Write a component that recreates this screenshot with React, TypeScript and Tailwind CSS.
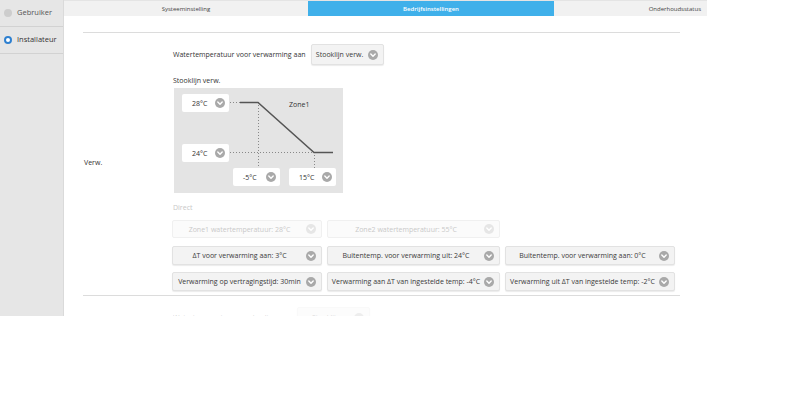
import React from "react";

function Chev({ light = false }: { light?: boolean }) {
  return (
    <svg width="10" height="10" viewBox="0 0 10 10" className="shrink-0">
      <circle cx="5" cy="5" r="5" fill={light ? "#e6e6e6" : "#a9a9a9"} />
      <path d="M2.8 4 L5 6.2 L7.2 4" stroke="#fff" strokeWidth="1.4" fill="none" strokeLinecap="round" strokeLinejoin="round" />
    </svg>
  );
}

function Sel({ label, w, disabled = false }: { label: string; w: string; disabled?: boolean }) {
  return (
    <div
      className={`${w} h-full flex items-center rounded-[2px] border pr-[5px] ${
        disabled
          ? "bg-[#fbfbfb] border-[#f0f0f0] text-[#c9c9c9]"
          : "bg-[#f3f3f3] border-[#e2e2e2] text-[#3a3a3a] shadow-[0_1px_1px_rgba(0,0,0,0.08)]"
      }`}
    >
      <span className="flex-1 text-center whitespace-nowrap">{label}</span>
      <Chev light={disabled} />
    </div>
  );
}

function ChartSel({ label, cls }: { label: string; cls: string }) {
  return (
    <div className={`absolute ${cls} w-[47px] h-[18px] bg-white rounded-[2px] flex items-center pl-[10px] pr-[4px] text-[#333]`}>
      <span className="flex-1">{label}</span>
      <Chev />
    </div>
  );
}

export default function App() {
  return (
    <div className="w-[800px] h-[406px] bg-white" style={{ fontFamily: '"Open Sans", sans-serif' }}>
      <div className="h-[316px] flex overflow-hidden text-[7px] leading-none">
        <div className="w-[64px] bg-[#e6e6e6] border-r border-[#dadada] shrink-0 text-[7.5px]">
          <div className="h-[27px] flex items-center gap-[5px] pl-[4px] border-b border-[#d2d2d2] text-[#555]">
            <span className="w-[8px] h-[8px] rounded-full bg-[#cdcdcd]" />
            <span>Gebruiker</span>
          </div>
          <div className="h-[27px] flex items-center gap-[5px] pl-[4px] border-b border-[#d2d2d2] text-[#333]">
            <span className="w-[8px] h-[8px] rounded-full border-[2px] border-[#2f80d0] bg-white" />
            <span>Installateur</span>
          </div>
        </div>
        <div className="flex-1 min-w-0">
          <div className="w-[643px] h-[16px] flex bg-[#f1f1f1] border-t border-[#e4e4e4] text-[6px]">
            <div className="w-[244px] flex items-center justify-center text-[#444]">Systeeminstelling</div>
            <div className="w-[246px] flex items-center justify-center bg-[#3fb0ea] text-white font-semibold">Bedrijfsinstellingen</div>
            <div className="w-[153px] flex items-center justify-end pr-[6px] text-[#444]">Onderhoudsstatus</div>
          </div>
          <div className="ml-[19px] w-[597px] mt-[16px] border-t border-[#dcdcdc] border-b pb-[4px] flex">
            <div className="w-[89px] flex items-center pl-[1px] text-[#333]">Verw.</div>
            <div className="flex-1">
              <div className="mt-[11px] h-[21px] flex items-center text-[#333]">
                <span className="ml-[1px]">Watertemperatuur voor verwarming aan</span>
                <div className="ml-[5px] h-full">
                  <Sel label="Stooklijn verw." w="w-[73px]" />
                </div>
              </div>
              <div className="mt-[10px] h-[10px] flex items-center ml-[1px] text-[#333]">Stooklijn verw.</div>
              <div className="mt-[3px] ml-[2px] relative w-[169px] h-[105px] bg-[#e4e4e4]">
                <svg width="169" height="105" className="absolute left-0 top-0">
                  <g stroke="#888" strokeWidth="1" strokeDasharray="1 2" fill="none">
                    <path d="M56 14.5 H66" />
                    <path d="M84.5 14 V80" />
                    <path d="M56 64.5 H140" />
                    <path d="M140.5 64 V80" />
                  </g>
                  <path d="M66 14.5 H84 L140 64.5 H159" stroke="#555" strokeWidth="1.5" fill="none" />
                </svg>
                <span className="absolute left-[115px] top-[13px] text-[#333]">Zone1</span>
                <ChartSel label="28°C" cls="left-[8px] top-[6px]" />
                <ChartSel label="24°C" cls="left-[8px] top-[56px]" />
                <ChartSel label="-5°C" cls="left-[59px] top-[80px]" />
                <ChartSel label="15°C" cls="left-[115px] top-[80px]" />
              </div>
              <div className="mt-[9px] h-[10px] flex items-center ml-[1px] text-[#c8c8c8]">Direct</div>
              <div className="mt-[8px] h-[18px] flex gap-[5px]">
                <Sel label="Zone1 watertemperatuur: 28°C" w="w-[150px]" disabled />
                <Sel label="Zone2 watertemperatuur: 55°C" w="w-[173px]" disabled />
              </div>
              <div className="mt-[8px] h-[19px] flex gap-[5px]">
                <Sel label="ΔT voor verwarming aan: 3°C" w="w-[150px]" />
                <Sel label="Buitentemp. voor verwarming uit: 24°C" w="w-[173px]" />
                <Sel label="Buitentemp. voor verwarming aan: 0°C" w="w-[170px]" />
              </div>
              <div className="mt-[7px] h-[19px] flex gap-[5px]">
                <Sel label="Verwarming op vertragingstijd: 30min" w="w-[150px]" />
                <Sel label="Verwarming aan ΔT van ingestelde temp: -4°C" w="w-[173px]" />
                <Sel label="Verwarming uit ΔT van ingestelde temp: -2°C" w="w-[170px]" />
              </div>
            </div>
          </div>
          <div className="ml-[19px] w-[597px] flex opacity-20">
            <div className="w-[89px]" />
            <div className="flex-1 mt-[11px] h-[21px] flex items-center text-[#333]">
              <span className="ml-[1px] w-[124px] whitespace-nowrap overflow-hidden">Watertemperatuur voor koeling</span>
              <div className="h-full">
                <Sel label="Stooklijn" w="w-[73px]" />
              </div>
            </div>
          </div>
        </div>
      </div>
    </div>
  );
}
